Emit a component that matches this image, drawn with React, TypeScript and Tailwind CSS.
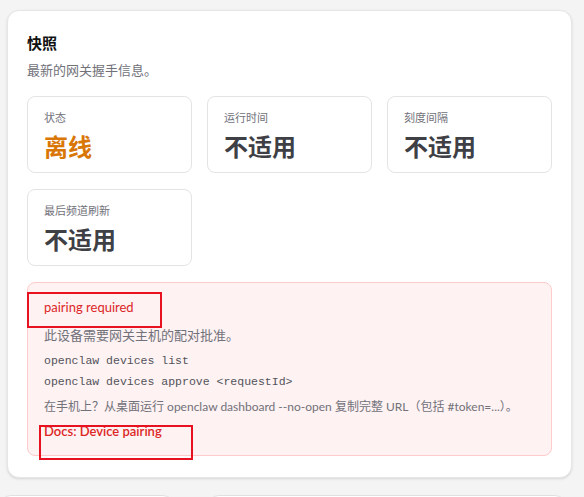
const sans = '"Noto Sans", "Noto Sans CJK SC", sans-serif';
const latin = 'Lato, "Noto Sans CJK SC", sans-serif';
const mono = '"Liberation Mono", "DejaVu Sans Mono", monospace';

type Stat = { label: string; value: string; tone?: "warn" };

const stats: Stat[] = [
  { label: "状态", value: "离线", tone: "warn" },
  { label: "运行时间", value: "不适用" },
  { label: "刻度间隔", value: "不适用" },
  { label: "最后频道刷新", value: "不适用" },
];

const StatCard = ({ label, value, tone }: Stat) => (
  <div className="rounded-lg border border-[#e4e4e7] bg-white px-4 pt-[15px] pb-[9px]">
    <div className="text-[11px] leading-3 text-[#71717a]">{label}</div>
    <div
      className={
        "mt-[7px] text-[24px] leading-8 font-bold " +
        (tone === "warn" ? "text-[#d97706]" : "text-[#3f3f46]")
      }
    >
      {value}
    </div>
  </div>
);

const App = () => {
  return (
    <div
      className="relative h-[497px] w-[584px] overflow-hidden bg-[#f4f4f4]"
      style={{ fontFamily: sans }}
    >
      <div className="ml-[7px] pt-[10px]">
        <section className="w-[565px] rounded-xl border border-[#e6e6e6] bg-white px-[19px] pt-[21px] pb-[21px] shadow-sm">
          <h2 className="text-[15px] leading-[22px] font-bold text-[#111]">快照</h2>
          <p className="mt-[6px] text-[13px] leading-5 text-[#71717a]">最新的网关握手信息。</p>

          <div className="mt-4 grid grid-cols-3 gap-x-[15px] gap-y-4">
            {stats.map((s) => (
              <StatCard key={s.label} {...s} />
            ))}
          </div>

          {/* pairing error callout */}
          <div className="mt-4 rounded-lg border border-[#fecaca] bg-[#fef2f2] p-4" style={{ fontFamily: latin }}>
            <div className="text-[13px] leading-4 text-[#dc2626]">pairing required</div>
            <div className="mt-3 text-[13px] leading-4 text-[#71717a]">此设备需要网关主机的配对批准。</div>
            <div className="mt-[7px] text-[11.5px] leading-[21px] text-[#52525b]" style={{ fontFamily: mono }}>
              <div>openclaw devices list</div>
              <div>openclaw devices approve &lt;requestId&gt;</div>
            </div>
            <div className="mt-[7px] whitespace-nowrap text-[12px] leading-4 text-[#71717a]">
              在手机上？从桌面运行 openclaw dashboard --no-open 复制完整 URL（包括 #token=...）。
            </div>
            <div className="mt-2 text-[13px] leading-4 font-semibold text-[#dc2626]">Docs: Device pairing</div>
          </div>
        </section>

        <div className="mt-[17px] -ml-[8px] flex gap-[32px]">
          <div className="h-6 w-[176px] rounded-t-xl border border-[#e0e0e0] bg-white" />
          <div className="h-6 w-[360px] rounded-t-xl border border-[#e0e0e0] bg-white" />
        </div>
      </div>

      {/* highlight markers */}
      <div className="pointer-events-none absolute left-[27px] top-[292px] h-[36px] w-[135px] border-2 border-[#e8111f]" />
      <div className="pointer-events-none absolute left-[39px] top-[425px] h-[35px] w-[154px] border-2 border-[#e8111f]" />
    </div>
  );
};

export default App;
